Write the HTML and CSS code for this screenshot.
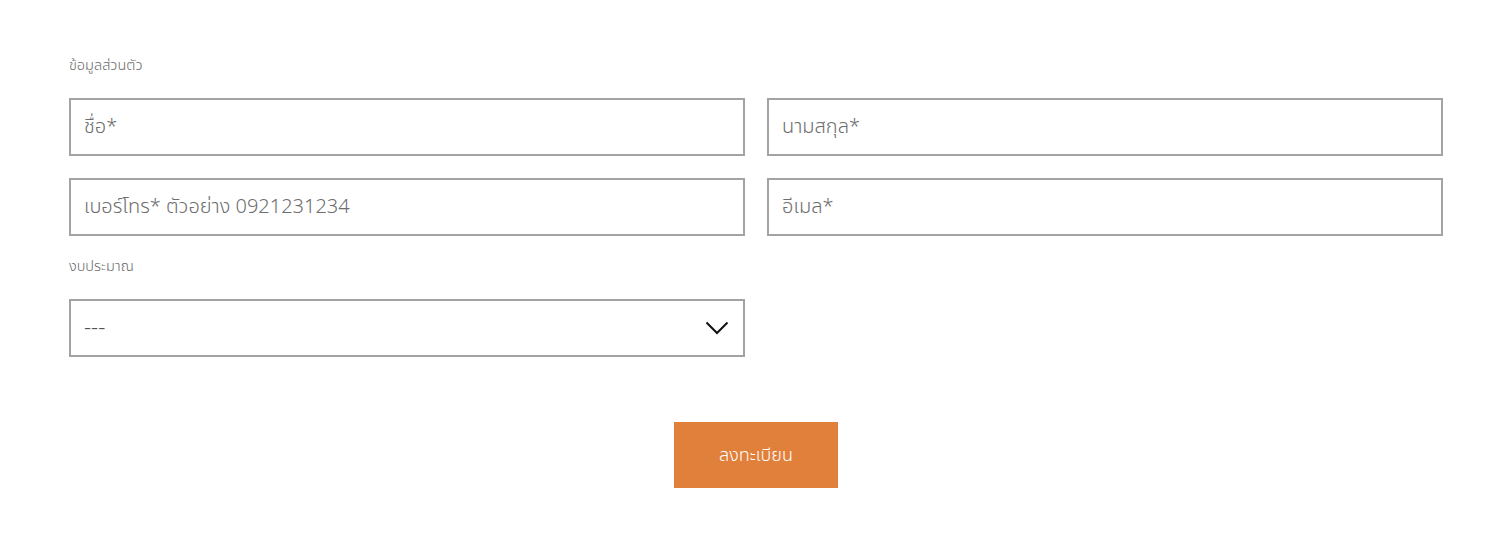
FILE: index.html
```html
<!DOCTYPE html>
<html lang="th">
<head>
<meta charset="utf-8">
<title>ลงทะเบียน</title>
<link rel="stylesheet" href="styles.css">
</head>
<body>
<form class="form">
  <div class="section-label">ข้อมูลส่วนตัว</div>
  <div class="grid">
    <input class="field" type="text" placeholder="ชื่อ*">
    <input class="field" type="text" placeholder="นามสกุล*">
    <input class="field" type="text" placeholder="เบอร์โทร* ตัวอย่าง 0921231234">
    <input class="field" type="text" placeholder="อีเมล*">
  </div>
  <div class="section-label budget-label">งบประมาณ</div>
  <div class="grid">
    <div class="select">
      <span class="select-value">---</span>
      <svg class="chevron" width="24" height="14" viewBox="0 0 24 14"><path d="M1.5 1.5 L12 12 L22.5 1.5" fill="none" stroke="#111" stroke-width="2"/></svg>
    </div>
  </div>
  <div class="actions">
    <button class="submit" type="button">ลงทะเบียน</button>
  </div>
</form>
</body>
</html>
```

FILE: styles.css
```css
html, body {
  margin: 0;
  padding: 0;
  background: #fff;
}
body {
  font-family: "Noto Sans Thai", "Noto Sans", "Liberation Sans", sans-serif;
  font-weight: 300;
  color: #666;
}
.form {
  width: 1374px;
  margin-left: 69px;
  padding-top: 55px;
}
.section-label {
  font-size: 14.5px;
  line-height: 22px;
  color: #6a6a6a;
  margin-bottom: 21px;
}
.budget-label {
  margin-top: 20px;
  margin-bottom: 21px;
}
.grid {
  display: grid;
  grid-template-columns: 676px 676px;
  column-gap: 22px;
  row-gap: 22px;
}
.field, .select {
  box-sizing: border-box;
  height: 58px;
  border: 2px solid #a3a3a3;
  padding: 0 13px;
  font-family: inherit;
  font-weight: 300;
  font-size: 20px;
  color: #555;
  background: #fff;
  outline: none;
}
.field::placeholder {
  color: #6e6e6e;
}
.select {
  display: flex;
  align-items: center;
  justify-content: space-between;
  padding-right: 13px;
}
.select-value {
  color: #555;
  font-size: 22px;
}
.chevron {
  display: block;
  margin-right: 1px;
}
.actions {
  display: flex;
  justify-content: center;
  margin-top: 65px;
}
.submit {
  width: 164px;
  height: 66px;
  border: 0;
  background: #e0803b;
  color: #fff;
  font-family: inherit;
  font-weight: 300;
  font-size: 18px;
  cursor: pointer;
}
```
